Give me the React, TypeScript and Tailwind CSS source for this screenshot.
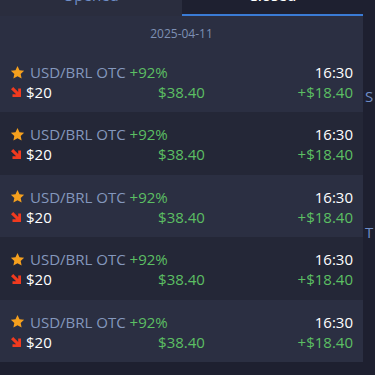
import React from "react";

const trades = Array.from({ length: 5 }, () => ({
  pair: "USD/BRL OTC",
  payout: "+92%",
  time: "16:30",
  amount: "$20",
  total: "$38.40",
  profit: "+$18.40",
}));

const Star = () => (
  <svg width="15" height="15" viewBox="0 0 24 24" className="shrink-0">
    <path
      d="M12 1.5l3.2 6.9 7.4.8-5.5 5.1 1.5 7.4L12 17.9l-6.6 3.8 1.5-7.4L1.4 9.2l7.4-.8z"
      fill="#f5a01e"
    />
  </svg>
);

const DownArrow = () => (
  <svg width="12" height="12" viewBox="0 0 12 12" className="shrink-0">
    <path d="M1 3.2L3.2 1l5 5V2.5h2.8V11H2.5V8.2h3.7z" fill="#f03a1f" />
  </svg>
);

export default function App() {
  return (
    <div
      className="flex h-[375px] w-[375px] overflow-hidden bg-[#1e2030]"
      style={{ fontFamily: '"Open Sans", "Liberation Sans", sans-serif' }}
    >
      <div className="flex w-[363px] shrink-0 flex-col">
        <div className="flex h-[16px] shrink-0">
          <div className="flex flex-1 justify-center overflow-hidden bg-[#2a2d3e]">
            <span className="mt-[-15px] text-[15px] leading-[20px] text-[#6f8ec8]">Opened</span>
          </div>
          <div className="flex flex-1 justify-center overflow-hidden border-b-2 border-[#3a7bd5] bg-[#1e2030]">
            <span className="mt-[-15px] text-[15px] font-semibold leading-[20px] text-white">Closed</span>
          </div>
        </div>
        <div className="flex h-[34px] shrink-0 items-center justify-center bg-[#2b2f42] pt-[1px] text-[12px] text-[#7d8fb3]">
          2025-04-11
        </div>
        {trades.map((t, i) => (
          <div
            key={i}
            className={`flex h-[62.4px] shrink-0 flex-col px-[10px] pt-[12px] text-[15px] leading-[20px] ${
              i % 2 === 0 ? "bg-[#2b2f42]" : "bg-[#242737]"
            }`}
          >
            <div className="flex items-center">
              <Star />
              <span className="ml-[5px] text-[#8497bd]">{t.pair}</span>
              <span className="ml-[4px] text-[#5cbf63]">{t.payout}</span>
              <span className="ml-auto text-white">{t.time}</span>
            </div>
            <div className="grid grid-cols-3 items-center">
              <div className="flex items-center">
                <DownArrow />
                <span className="ml-[4px] text-white">{t.amount}</span>
              </div>
              <span className="text-center text-[#5cbf63]">{t.total}</span>
              <span className="text-right text-[#5cbf63]">{t.profit}</span>
            </div>
          </div>
        ))}
      </div>
      <div className="flex flex-1 flex-col overflow-hidden bg-[#1e2030] pl-[2px] text-[15px] text-[#6f8ec8]">
        <span className="mt-[86px] leading-[20px]">S</span>
        <span className="mt-[116px] leading-[20px]">T</span>
      </div>
    </div>
  );
}
